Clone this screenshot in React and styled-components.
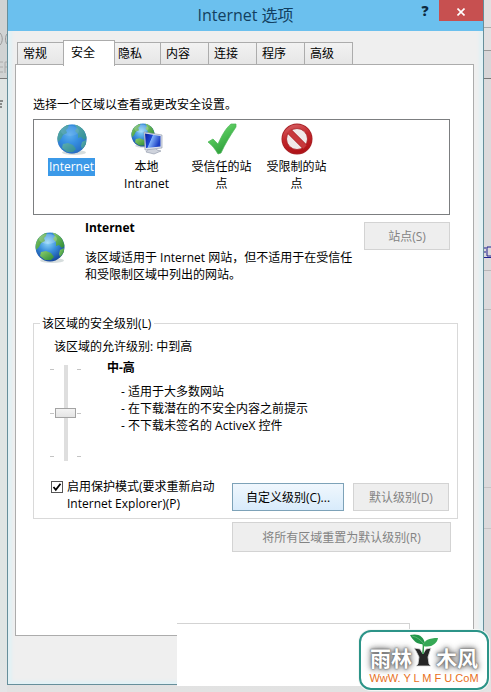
import React, { useState } from "react";
import styled, { createGlobalStyle, css } from "styled-components";

const GlobalStyle = createGlobalStyle`
  * {
    box-sizing: border-box;
  }

  body {
    margin: 0;
    font-family: "Open Sans", "Noto Sans CJK SC", sans-serif;
    font-size: 12px;
    line-height: 17px;
    color: #000;
  }

  button,
  input {
    font: inherit;
  }
`;

const Desktop = styled.div`
  position: relative;
  display: flex;
  min-height: 100vh;
  padding: 0 7px 7px;
  overflow: hidden;
  background: linear-gradient(#d9dada, #dcdfe0 90%, #e2e2e2);
`;

const BackEdge = styled.div`
  position: absolute;
  top: 0;
  bottom: 0;
  width: 7px;
  overflow: hidden;
  ${({ $side }) =>
    $side === "left"
      ? css`
          left: 0;
          background: linear-gradient(#d0d3d3 0 78px, #dfe5e4 78px 95%, #e4e5e7);
        `
      : css`
          right: 0;
          background: linear-gradient(
            #e2e0e1 0 27px,
            #aaa 27px 28px,
            #e2e0e1 28px 50px,
            #999 50px 51px,
            #d8d6d8 51px 78px,
            #777 78px 79px,
            #dcdadc 79px 270px,
            #b9b7b9 270px 271px,
            #dcdadc 271px 309px,
            #b9b7b9 309px 310px,
            #dcdadc 310px 487px,
            #c6c4c6 487px 488px,
            #dcdadc 488px 528px,
            #c6c4c6 528px 529px,
            #dcdadc 529px 95%,
            #e4e4e4
          );
        `}
`;

const EdgeSvg = styled.svg`
  display: block;
`;

const Window = styled.section`
  position: relative;
  z-index: 1;
  display: flex;
  flex: 1;
  flex-direction: column;
  min-width: 0;
  border: 1px solid #668f9b;
  border-top: 0;
  background: #efefef;
  box-shadow: inset -4px -3px 3px #e2f1f5, inset 4px 0 3px #e2f1f5;
`;

const TitleBar = styled.header`
  display: grid;
  grid-template-columns: 68px 1fr 68px;
  height: 31px;
  background: #6bc0ee;
`;

const WindowTitle = styled.h1`
  grid-column: 2;
  margin: 0;
  font-size: 16px;
  font-weight: 400;
  line-height: 31px;
  text-align: center;
  color: #123f60;
`;

const WindowControls = styled.div`
  display: flex;
  align-items: flex-start;
  justify-content: flex-end;
  gap: 5px;
`;

const HelpButton = styled.button`
  width: 18px;
  height: 22px;
  padding: 0;
  border: 0;
  background: none;
  font-size: 14px;
  font-weight: 800;
  line-height: 22px;
  color: #0d2a40;
`;

const CloseButton = styled.button`
  display: flex;
  align-items: center;
  justify-content: center;
  width: 44px;
  height: 21px;
  padding: 2px 0 0;
  border: 0;
  background: #c75050;
`;

const Body = styled.div`
  display: flex;
  flex: 1;
  flex-direction: column;
  padding: 9px 9px 48px 7px;
`;

const TabList = styled.div`
  display: flex;
  align-items: flex-end;
  height: 24px;
  padding-left: 2px;
`;

const Tab = styled.button`
  width: 48px;
  height: 22px;
  padding: 0 5px;
  border: 1px solid #acacac;
  border-width: 1px 1px 0 0;
  background: linear-gradient(#f2f2f2, #e6e6e6);
  line-height: 21px;
  text-align: left;
  color: #000;

  &:first-child {
    border-left-width: 1px;
  }

  ${({ $active }) =>
    $active &&
    css`
      z-index: 1;
      width: 52px;
      height: 26px;
      margin: 0 -2px -2px;
      padding: 0 7px 3px;
      border-left-width: 1px;
      background: #fff;
    `}
`;

const Panel = styled.div`
  flex: 1;
  padding: 31px 15px 20px 17px;
  border: 1px solid #acacac;
  background: #fff;
`;

const Prompt = styled.p`
  margin: 0 0 6px;
`;

const ZoneList = styled.div`
  display: flex;
  height: 96px;
  margin-right: 8px;
  padding-top: 3px;
  border: 1px solid #7c7e80;
`;

const Zone = styled.button`
  display: flex;
  flex-direction: column;
  align-items: center;
  width: 75px;
  padding: 0;
  border: 0;
  background: none;
  color: #000;
`;

const ZoneLabel = styled.span`
  max-width: 64px;
  margin-top: 3px;
  padding: 0 1px;
  ${({ $active }) =>
    $active &&
    css`
      padding-bottom: 1px;
      background: #3b99e8;
      color: #fff;
    `}
`;

const ZoneInfo = styled.div`
  display: flex;
  align-items: flex-start;
  margin: 4px 8px 0 0;
`;

const InfoIcon = styled.div`
  width: 52px;
  padding: 12px 0 0 1px;
`;

const InfoText = styled.div`
  flex: 1;
`;

const InfoTitle = styled.h2`
  margin: 0 0 13px;
  font-size: 12px;
  font-weight: 700;
`;

const InfoParagraph = styled.p`
  margin: 0;
  padding-right: 4px;
`;

const PushButton = styled.button`
  flex: none;
  width: ${({ $width }) => $width}px;
  height: 28px;
  padding: 0;
  border: 1px solid #d3d3d3;
  background: #eee;
  color: #838383;

  &:enabled {
    border-color: #7da2b8;
    background: linear-gradient(#f0f7fd, #d8ebfb);
    color: #000;
  }
`;

const SiteButton = styled(PushButton)`
  margin-top: 3px;
`;

const LevelGroup = styled.fieldset`
  min-width: 0;
  margin: 32px 0 0;
  padding: 6px 8px 6px 17px;
  border: 1px solid #d9d9d9;
`;

const GroupLegend = styled.legend`
  margin-left: -11px;
  padding: 0 3px 0 2px;
`;

const AllowedLevels = styled.p`
  margin: 0 0 4px 3px;
`;

const LevelRow = styled.div`
  display: flex;
  gap: 26px;
  margin-left: -1px;
`;

const SliderBox = styled.div`
  display: grid;
  grid-template-columns: 4px 23px 4px;
  height: 106px;
  padding: 6px 0 4px;
`;

const Ticks = styled.div`
  display: flex;
  flex-direction: column;
  justify-content: space-between;
  padding: 4px 0;

  i {
    height: 1px;
    background: #c4c4c4;
  }
`;

const LevelSlider = styled.input`
  appearance: none;
  writing-mode: vertical-lr;
  direction: rtl;
  width: 21px;
  height: 96px;
  margin: 0 1px;
  background: linear-gradient(#dedede, #dedede) center / 4px 100% no-repeat;

  &::-webkit-slider-thumb {
    appearance: none;
    width: 21px;
    height: 10px;
    border: 1px solid #a3a3a3;
    background: linear-gradient(#f3f3f3, #e4e4e4);
  }
`;

const LevelName = styled.h3`
  margin: 0 0 7px;
  font-size: 12px;
  font-weight: 700;
`;

const LevelNotes = styled.ul`
  margin: 0;
  padding: 0 0 0 14px;
  list-style: none;
`;

const ActionRow = styled.div`
  display: flex;
  align-items: flex-start;
  gap: 9px;
  margin-top: 18px;
`;

const ProtectedMode = styled.label`
  display: flex;
  flex: 1;
  gap: 4px;
  min-width: 0;
  margin-top: -5px;
`;

const CheckBox = styled.input`
  appearance: none;
  flex: none;
  width: 12px;
  height: 12px;
  margin: 3px 0 0;
  border: 1px solid #555;
  background: #fff;

  &:checked {
    background: #fff
      url("data:image/svg+xml,%3Csvg xmlns='http://www.w3.org/2000/svg' viewBox='0 0 10 10'%3E%3Cpath d='M1.5 5l2.3 2.8L8.5 1.8' fill='none' stroke='%23000' stroke-width='1.8'/%3E%3C/svg%3E")
      center / 10px;
  }
`;

const ResetRow = styled.div`
  display: flex;
  justify-content: flex-end;
  margin: 3px 7px 0 0;
`;

const ResetButton = styled(PushButton)`
  height: 30px;
`;

const BlankPatch = styled.div`
  position: absolute;
  z-index: 2;
  bottom: 6px;
  left: 177px;
  right: 81px;
  height: 63px;
  border: 1px solid #d3d3d3;
  border-width: 1px 1px 0 0;
  background: #fff;
`;

const Watermark = styled.aside`
  position: absolute;
  z-index: 3;
  right: 2px;
  bottom: 2px;
  display: flex;
  flex-direction: column;
  align-items: center;
  width: 130px;
  height: 60px;
  border: 2px solid #2c9488;
  border-radius: 12px;
  background: #fff;
  box-shadow: 0 0 0 1px #f4f7f6;
`;

const BrandRow = styled.div`
  display: flex;
  align-items: flex-end;
  height: 38px;

  svg {
    z-index: 1;
    margin: 0 -3px 3px;
  }
`;

const BrandText = styled.span`
  font-family: "Noto Sans CJK SC", sans-serif;
  font-size: 21px;
  font-weight: 700;
  line-height: 26px;
  color: #fff;
  text-shadow: 0 0 1px #666, 0 0 2px #666, 0 0 4px #888, 0 0 6px #888,
    0 0 8px #999;
`;

const BrandUrl = styled.span`
  font-family: "Liberation Sans", sans-serif;
  font-size: 11px;
  line-height: 17px;
  color: #e8701c;
`;

function Globe({ id, x = 0, y = 0, r = 15 }) {
  return (
    <g transform={`translate(${x} ${y}) scale(${r / 15})`}>
      <defs>
        <radialGradient id={`${id}-sea`} cx="0.42" cy="0.35" r="0.7">
          <stop offset="0" stopColor="#8fd6f8" />
          <stop offset="0.45" stopColor="#3a8fdc" />
          <stop offset="1" stopColor="#123f94" />
        </radialGradient>
        <linearGradient id={`${id}-land`} x1="0" y1="0" x2="1" y2="1">
          <stop offset="0" stopColor="#8fcf6c" />
          <stop offset="1" stopColor="#2b8a35" />
        </linearGradient>
        <clipPath id={`${id}-clip`}>
          <circle cx="15" cy="15" r="14.5" />
        </clipPath>
      </defs>
      <ellipse cx="17" cy="28.5" rx="12" ry="2.5" fill="#9aa" opacity="0.4" />
      <circle cx="15" cy="15" r="14.5" fill={`url(#${id}-sea)`} />
      <g clipPath={`url(#${id}-clip)`} fill={`url(#${id}-land)`}>
        <path d="M0 14C1 6 6 1 12 0l-1 4-2 2 1 3-4 2-2 4-3 3z" />
        <path d="M17 0l5 1 5 5 3 8-3 2-3-3-3 1 0-4-3-3 2-3z" />
        <path d="M6 20l5-1 5 2 3 4-3 3-6 0-5-4z" />
        <path d="M25 18l4-2v5l-4 4-1-3z" />
      </g>
      <ellipse cx="13" cy="7" rx="9" ry="5" fill="#fff" opacity="0.22" />
    </g>
  );
}

function InternetIcon({ id, selected }) {
  return (
    <svg width="32" height="32" viewBox="0 0 32 32" aria-hidden="true">
      <Globe id={id} x={1} y={1} />
      {selected && <circle cx="16" cy="16" r="14.5" fill="#3590e6" opacity="0.55" />}
    </svg>
  );
}

function IntranetIcon() {
  return (
    <svg width="32" height="32" viewBox="0 0 32 32" aria-hidden="true">
      <defs>
        <linearGradient id="screen" x1="0" y1="0" x2="1" y2="0.4">
          <stop offset="0" stopColor="#0a1f9c" />
          <stop offset="0.45" stopColor="#1c46d4" />
          <stop offset="0.5" stopColor="#7fb0fa" />
          <stop offset="1" stopColor="#1c3fc4" />
        </linearGradient>
      </defs>
      <Globe id="intranet" x={0} y={0} r={12} />
      <path d="M17 26l7-2 2 3 4 1-7 3-8-2z" fill="#cfd3dc" stroke="#8c94a6" strokeWidth="0.6" />
      <path d="M13 9l18 3v13l-17 2z" fill="#dde2ec" stroke="#8c94a6" strokeWidth="0.6" />
      <path d="M14 10.500l15.500 2.500v10.500L15 25z" fill="url(#screen)" />
    </svg>
  );
}

function TrustedIcon() {
  return (
    <svg width="32" height="32" viewBox="0 0 32 32" aria-hidden="true">
      <defs>
        <linearGradient id="tick" x1="0" y1="0" x2="0.6" y2="1">
          <stop offset="0" stopColor="#8fe08a" />
          <stop offset="0.5" stopColor="#4fc256" />
          <stop offset="1" stopColor="#2b9a38" />
        </linearGradient>
      </defs>
      <path
        d="M2 19l5-3 5 5C16 12 20 5 25 1h5v3C24 13 19 21 15 30l-3 1C9 26 6 22 2 19z"
        fill="url(#tick)"
        stroke="#4ab556"
        strokeWidth="0.7"
      />
    </svg>
  );
}

function RestrictedIcon() {
  return (
    <svg width="32" height="32" viewBox="0 0 32 32" aria-hidden="true">
      <defs>
        <linearGradient id="ban" x1="0" y1="0" x2="0.3" y2="1">
          <stop offset="0" stopColor="#d9686c" />
          <stop offset="0.5" stopColor="#c3282d" />
          <stop offset="1" stopColor="#b01318" />
        </linearGradient>
      </defs>
      <circle cx="16" cy="16" r="15.5" fill="#a82126" />
      <circle cx="16" cy="16" r="14.6" fill="url(#ban)" />
      <circle cx="16" cy="16" r="10.5" fill="#f1eaea" stroke="#a82126" strokeWidth="0.8" />
      <path d="M8.500 8.500l15 15" stroke="#a82126" strokeWidth="6" />
      <path d="M8 8l16 16" stroke="#c8383c" strokeWidth="4.6" />
    </svg>
  );
}

function SproutIcon() {
  return (
    <svg width="30" height="34" viewBox="0 0 30 34" aria-hidden="true">
      <path
        d="M5 15l6 1 3 5 3-5 5-1-1 3-2 6 1 7 2 2H7l2-2 1-7-3-6z"
        fill="#262626"
        stroke="#ddd"
        strokeWidth="0.8"
      />
      <path d="M14 21c0-5 1-8 0-11" stroke="#2fa04a" strokeWidth="1.5" fill="none" />
      <path d="M1 2c8-2 14 1 15 9C9 12 5 9 1 2z" fill="#23964a" />
      <path d="M14 13c1-6 6-8 15-8-1 6-7 10-15 8z" fill="#35a855" />
      <path d="M3 3c5 1 9 4 12 8" stroke="#7cc98c" strokeWidth="0.6" fill="none" />
    </svg>
  );
}

const tabs = ["常规", "安全", "隐私", "内容", "连接", "程序", "高级"];

const zones = [
  { name: "Internet", icon: <InternetIcon id="zone" selected /> },
  { name: "本地 Intranet", icon: <IntranetIcon /> },
  { name: "受信任的站点", icon: <TrustedIcon /> },
  { name: "受限制的站点", icon: <RestrictedIcon /> },
];

const notes = [
  "适用于大多数网站",
  "在下载潜在的不安全内容之前提示",
  "不下载未签名的 ActiveX 控件",
];

function SecurityLevel() {
  const [level, setLevel] = useState(50);
  const [isProtected, setIsProtected] = useState(true);

  return (
    <LevelGroup>
      <GroupLegend>该区域的安全级别(L)</GroupLegend>
      <AllowedLevels>该区域的允许级别: 中到高</AllowedLevels>
      <LevelRow>
        <SliderBox>
          <Ticks>
            <i />
            <i />
            <i />
          </Ticks>
          <LevelSlider
            type="range"
            aria-label="该区域的安全级别"
            step="50"
            value={level}
            onChange={(e) => setLevel(Number(e.target.value))}
          />
          <Ticks>
            <i />
            <i />
            <i />
          </Ticks>
        </SliderBox>
        <div>
          <LevelName>中-高</LevelName>
          <LevelNotes>
            {notes.map((note) => (
              <li key={note}>- {note}</li>
            ))}
          </LevelNotes>
        </div>
      </LevelRow>
      <ActionRow>
        <ProtectedMode>
          <CheckBox
            type="checkbox"
            checked={isProtected}
            onChange={(e) => setIsProtected(e.target.checked)}
          />
          <span>启用保护模式(要求重新启动 Internet Explorer)(P)</span>
        </ProtectedMode>
        <PushButton $width={112}>自定义级别(C)...</PushButton>
        <PushButton $width={96} disabled>
          默认级别(D)
        </PushButton>
      </ActionRow>
    </LevelGroup>
  );
}

function App() {
  const [activeTab, setActiveTab] = useState("安全");
  const [activeZone, setActiveZone] = useState("Internet");

  return (
    <>
      <GlobalStyle />
      <Desktop>
        <BackEdge $side="left">
          <EdgeSvg width="7" height="120" viewBox="0 0 7 120" aria-hidden="true">
            <path d="M0 33c3 3 3 9 0 12M7 34c-2 2-2 8 0 10" stroke="#999" fill="none" />
            <path d="M0 62h3M0 67h3M0 72h3M5 73V62h2M5 67h2" stroke="#aaa" fill="none" />
            <path d="M0 78.500h7" stroke="#777" />
            <path d="M0 101h3M0 104h2M0 107h2" stroke="#333" />
          </EdgeSvg>
        </BackEdge>
        <BackEdge $side="right">
          <EdgeSvg width="7" height="270" viewBox="0 0 7 270" aria-hidden="true">
            <path d="M0 248h2M0 252h2M3 247h4M3 247v9h4M0 257.500h7" stroke="#1f1f8f" fill="none" />
          </EdgeSvg>
        </BackEdge>
        <Window>
          <TitleBar>
            <WindowTitle>Internet 选项</WindowTitle>
            <WindowControls>
              <HelpButton aria-label="帮助">?</HelpButton>
              <CloseButton aria-label="关闭">
                <svg width="8" height="8" viewBox="0 0 8 8" aria-hidden="true">
                  <path d="M0.500 0.500l7 7M7.500 0.500l-7 7" stroke="#fff" strokeWidth="1.6" />
                </svg>
              </CloseButton>
            </WindowControls>
          </TitleBar>
          <Body>
            <TabList role="tablist">
              {tabs.map((tab) => (
                <Tab
                  key={tab}
                  role="tab"
                  aria-selected={tab === activeTab}
                  $active={tab === activeTab}
                  onClick={() => setActiveTab(tab)}
                >
                  {tab}
                </Tab>
              ))}
            </TabList>
            <Panel role="tabpanel">
              <Prompt>选择一个区域以查看或更改安全设置。</Prompt>
              <ZoneList>
                {zones.map(({ name, icon }) => (
                  <Zone key={name} onClick={() => setActiveZone(name)}>
                    {icon}
                    <ZoneLabel $active={name === activeZone}>{name}</ZoneLabel>
                  </Zone>
                ))}
              </ZoneList>
              <ZoneInfo>
                <InfoIcon>
                  <InternetIcon id="info" />
                </InfoIcon>
                <InfoText>
                  <InfoTitle>Internet</InfoTitle>
                  <InfoParagraph>
                    该区域适用于 Internet 网站，但不适用于在受信任和受限制区域中列出的网站。
                  </InfoParagraph>
                </InfoText>
                <SiteButton $width={86} disabled>
                  站点(S)
                </SiteButton>
              </ZoneInfo>
              <SecurityLevel />
              <ResetRow>
                <ResetButton $width={219} disabled>
                  将所有区域重置为默认级别(R)
                </ResetButton>
              </ResetRow>
            </Panel>
          </Body>
        </Window>
        <BlankPatch />
        <Watermark>
          <BrandRow>
            <BrandText>雨林</BrandText>
            <SproutIcon />
            <BrandText>木风</BrandText>
          </BrandRow>
          <BrandUrl>WwW. Y L M F U.CoM</BrandUrl>
        </Watermark>
      </Desktop>
    </>
  );
}

export default App;
